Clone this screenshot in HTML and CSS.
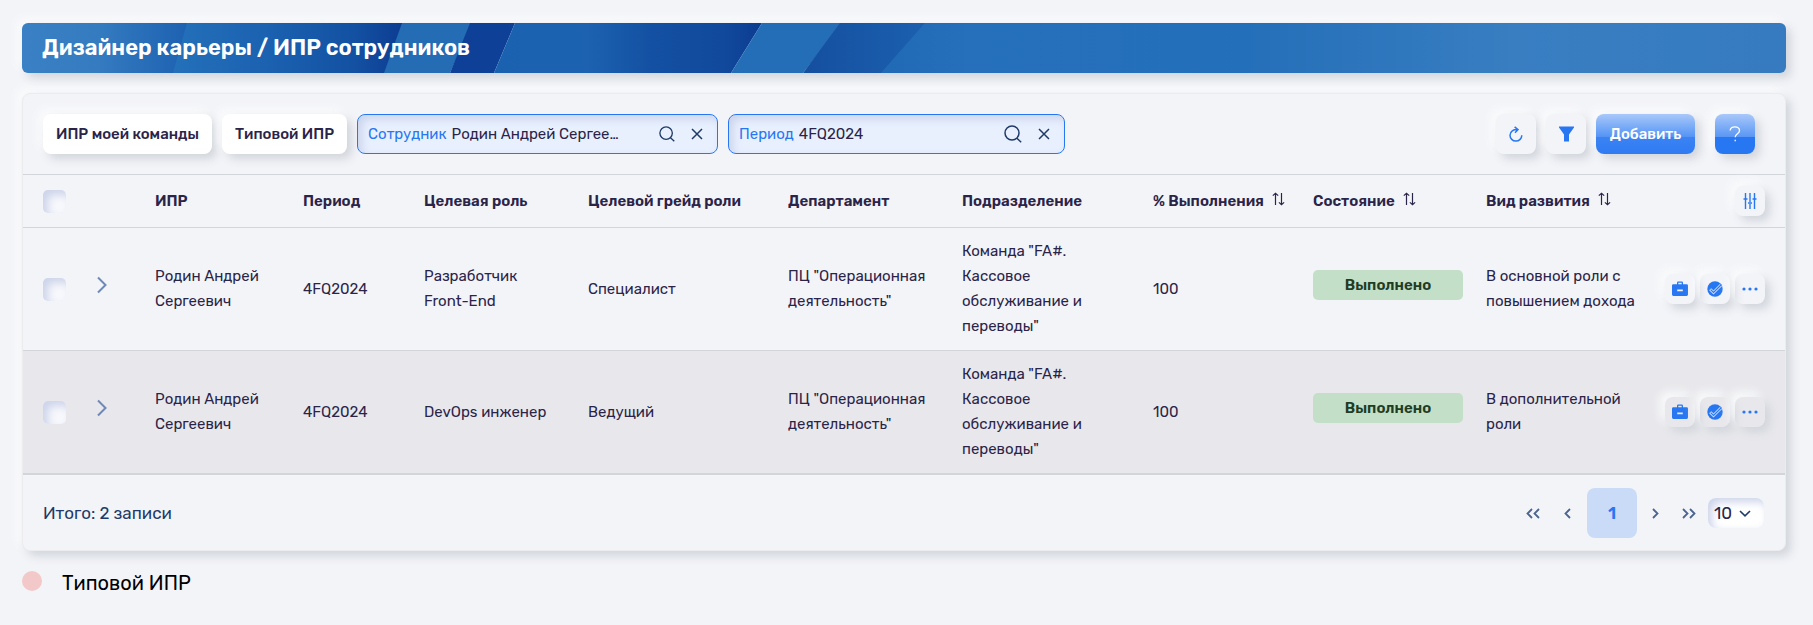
FILE: index.html
```html
<!DOCTYPE html>
<html lang="ru">
<head>
<meta charset="utf-8">
<title>Дизайнер карьеры / ИПР сотрудников</title>
<link rel="stylesheet" href="styles.css">
</head>
<body>
<svg class="sprite" aria-hidden="true">
  <symbol id="i-search" viewBox="0 0 18 18"><circle cx="8" cy="8" r="7"/><path d="M12.900 13.200l4.300 4"/></symbol>
  <symbol id="i-close" viewBox="0 0 12 12"><path d="M1 1l10 10M11 1L1 11"/></symbol>
  <symbol id="i-sort" viewBox="0 0 13 14"><path d="M3.500 13V1.500M.8 3.600l2.700-2.400 2.700 2.400M9.500 1v11.500M6.900 10.400l2.600 2.400 2.600-2.400"/></symbol>
  <symbol id="i-chevron" viewBox="0 0 10 18"><path d="M1 1.500L8.500 9 1 16.500"/></symbol>
  <symbol id="i-case" viewBox="0 0 16 16"><path fill-rule="evenodd" d="M5 3.200V1.800Q5 .5 6.300.5h3.400Q11 .5 11 1.800v1.400h3.600q1.400 0 1.400 1.400v9q0 1.400-1.400 1.400H1.400Q0 15 0 13.600v-9q0-1.400 1.400-1.400zM6.300 3.200h3.400V1.800H6.300zM5.200 8.600v1.600h5.600V8.600z"/></symbol>
  <symbol id="i-check" viewBox="0 0 16 16"><circle cx="8" cy="8" r="7.700"/><path class="tick-edge" d="M3.200 8.200l3.300 3.300L14 4"/><path class="tick-core" d="M3.700 8.700l2.800 2.800L14.500 3.500"/></symbol>
  <symbol id="i-dots" viewBox="0 0 16 4"><circle cx="2" cy="2" r="1.600"/><circle cx="8" cy="2" r="1.600"/><circle cx="14" cy="2" r="1.600"/></symbol>
</svg>

<header class="banner">
  <svg class="banner-art" viewBox="0 0 1764 50" preserveAspectRatio="none" aria-hidden="true">
    <defs>
      <linearGradient id="g1"><stop offset="0" stop-color="#3a80c4"/><stop offset=".45" stop-color="#347bc0"/><stop offset="1" stop-color="#1c60b0"/></linearGradient>
      <linearGradient id="g2"><stop offset="0" stop-color="#2470b9"/><stop offset=".4" stop-color="#1b62b1"/><stop offset=".8" stop-color="#1350a2"/><stop offset="1" stop-color="#0c3c92"/></linearGradient>
      <linearGradient id="g3"><stop offset="0" stop-color="#1a62b0"/><stop offset=".35" stop-color="#1c62b0"/><stop offset=".6" stop-color="#134fa2"/><stop offset=".85" stop-color="#114a9d"/><stop offset="1" stop-color="#0c3c92"/></linearGradient>
      <linearGradient id="g4"><stop offset="0" stop-color="#154f9f"/><stop offset="1" stop-color="#1b60af"/></linearGradient>
      <linearGradient id="g5"><stop offset="0" stop-color="#2069b5"/><stop offset=".1" stop-color="#2670bb"/><stop offset=".4" stop-color="#246fb9"/><stop offset=".7" stop-color="#387ec1"/><stop offset="1" stop-color="#367bc0"/></linearGradient>
    </defs>
    <path fill="url(#g1)" d="M0 0h170v50H0z"/>
    <path fill="url(#g2)" d="M165 0h216l-18 50H151z"/>
    <path fill="#246cb4" d="M380 0h70l-22 50h-66z"/>
    <path fill="#0f4097" d="M448 0h45l-21 50h-44z"/>
    <path fill="url(#g3)" d="M493 0h247l-31 50H472z"/>
    <path fill="#246db7" d="M740 0h80l-39 50h-72z"/>
    <path fill="url(#g4)" d="M818 0h86l-44 50h-79z"/>
    <path fill="url(#g5)" d="M903 0h861v50H859z"/>
  </svg>
  <h1 class="banner-title">Дизайнер карьеры / ИПР сотрудников</h1>
</header>

<main class="card">
  <div class="toolbar">
    <button class="btn btn-white">ИПР моей команды</button>
    <button class="btn btn-white">Типовой ИПР</button>
    <div class="field field-wide">
      <label class="field-label" for="employee">Сотрудник</label>
      <input class="field-input" id="employee" type="text" value="Родин Андрей Сергеевич">
      <button class="icon-btn" aria-label="Найти сотрудника"><svg class="ico s16"><use href="#i-search"/></svg></button>
      <button class="icon-btn" aria-label="Очистить сотрудника"><svg class="ico s12"><use href="#i-close"/></svg></button>
    </div>
    <div class="field">
      <label class="field-label" for="period">Период</label>
      <input class="field-input" id="period" type="text" value="4FQ2024">
      <button class="icon-btn" aria-label="Найти период"><svg class="ico s18"><use href="#i-search"/></svg></button>
      <button class="icon-btn" aria-label="Очистить период"><svg class="ico s12"><use href="#i-close"/></svg></button>
    </div>
    <div class="toolbar-end">
      <button class="btn btn-soft" aria-label="Обновить"><svg class="line-blue" width="16" height="16" viewBox="0 0 16 16"><path d="M9.800 3.600C5.500 3 2 5.600 2 9.200a5.900 5.900 0 0 0 11.800 0M6.600.8l3.400 2.800L7 6.800"/></svg></button>
      <button class="btn btn-soft" aria-label="Фильтр"><svg class="fill-blue" width="15" height="16" viewBox="0 0 15 16"><path d="M0 .5h15v1L10 8.500v7H5v-7L0 1.500z"/></svg></button>
      <button class="btn btn-primary">Добавить</button>
      <button class="btn btn-help" aria-label="Справка"><svg class="line-white" width="12" height="16" viewBox="0 0 12 16"><path d="M1.200 4.500C1.200 2.300 3.200.8 5.800.8s4.700 1.500 4.700 3.900c0 3.200-4.300 3.100-4.300 6.600M6.200 13.800v1.500"/></svg></button>
    </div>
  </div>

  <table class="grid">
    <colgroup><col class="c-check"><col class="c-open"><col class="c-ipr"><col class="c-period"><col class="c-role"><col class="c-grade"><col class="c-dept"><col class="c-unit"><col class="c-done"><col class="c-state"><col class="c-kind"><col class="c-act"></colgroup>
    <thead>
      <tr>
        <th class="first"><input class="check" type="checkbox" aria-label="Выбрать все"></th>
        <th></th>
        <th>ИПР</th>
        <th>Период</th>
        <th>Целевая роль</th>
        <th>Целевой грейд роли</th>
        <th>Департамент</th>
        <th>Подразделение</th>
        <th>% Выполнения<svg class="sort"><use href="#i-sort"/></svg></th>
        <th>Состояние<svg class="sort"><use href="#i-sort"/></svg></th>
        <th>Вид развития<svg class="sort"><use href="#i-sort"/></svg></th>
        <th class="last"><div class="actions"><button class="btn btn-small" aria-label="Настройка столбцов"><svg class="line-blue thin" width="14" height="16" viewBox="0 0 14 16"><path d="M2.500 0v16M7 0v9M7 11v5M11.500 0v16M.5 6h4M5 10h4M9.500 6h4"/></svg></button></div></th>
      </tr>
    </thead>
    <tbody>
      <tr>
        <td class="first"><input class="check" type="checkbox" aria-label="Выбрать строку 1"></td>
        <td><button class="icon-btn open" aria-label="Раскрыть"><svg class="chev"><use href="#i-chevron"/></svg></button></td>
        <td>Родин Андрей Сергеевич</td>
        <td>4FQ2024</td>
        <td class="narrow">Разработчик Front-End</td>
        <td>Специалист</td>
        <td>ПЦ "Операционная деятельность"</td>
        <td class="narrow">Команда "FA#. Кассовое обслуживание и переводы"</td>
        <td>100</td>
        <td><div class="badge">Выполнено</div></td>
        <td>В основной роли с повышением дохода</td>
        <td class="last"><div class="actions">
          <button class="btn btn-small" aria-label="Портфель"><svg class="fill-blue s16"><use href="#i-case"/></svg></button>
          <button class="btn btn-small" aria-label="Согласовать"><svg class="fill-blue s16"><use href="#i-check"/></svg></button>
          <button class="btn btn-small" aria-label="Ещё"><svg class="fill-blue dots"><use href="#i-dots"/></svg></button>
        </div></td>
      </tr>
      <tr>
        <td class="first"><input class="check" type="checkbox" aria-label="Выбрать строку 2"></td>
        <td><button class="icon-btn open" aria-label="Раскрыть"><svg class="chev"><use href="#i-chevron"/></svg></button></td>
        <td>Родин Андрей Сергеевич</td>
        <td>4FQ2024</td>
        <td class="narrow">DevOps инженер</td>
        <td>Ведущий</td>
        <td>ПЦ "Операционная деятельность"</td>
        <td class="narrow">Команда "FA#. Кассовое обслуживание и переводы"</td>
        <td>100</td>
        <td><div class="badge">Выполнено</div></td>
        <td>В дополнительной роли</td>
        <td class="last"><div class="actions">
          <button class="btn btn-small" aria-label="Портфель"><svg class="fill-blue s16"><use href="#i-case"/></svg></button>
          <button class="btn btn-small" aria-label="Согласовать"><svg class="fill-blue s16"><use href="#i-check"/></svg></button>
          <button class="btn btn-small" aria-label="Ещё"><svg class="fill-blue dots"><use href="#i-dots"/></svg></button>
        </div></td>
      </tr>
    </tbody>
  </table>

  <footer class="footer">
    <span class="total">Итого: 2 записи</span>
    <nav class="pager" aria-label="Страницы">
      <button class="page" aria-label="Первая"><svg width="14" height="11" viewBox="0 0 14 11"><path d="M6 1L1.500 5.500 6 10M13 1L8.500 5.500 13 10"/></svg></button>
      <button class="page" aria-label="Предыдущая"><svg width="7" height="11" viewBox="0 0 7 11"><path d="M6 1L1.500 5.500 6 10"/></svg></button>
      <button class="page page-current" aria-current="page">1</button>
      <button class="page" aria-label="Следующая"><svg width="7" height="11" viewBox="0 0 7 11"><path d="M1 1l4.500 4.500L1 10"/></svg></button>
      <button class="page" aria-label="Последняя"><svg width="14" height="11" viewBox="0 0 14 11"><path d="M1 1l4.500 4.500L1 10M8 1l4.500 4.500L8 10"/></svg></button>
    </nav>
    <div class="size">
      <select class="size-select" aria-label="Записей на странице"><option>10</option><option>20</option><option>50</option></select>
      <svg class="size-arrow" width="12" height="7" viewBox="0 0 12 7"><path d="M1 1l5 4.800L11 1"/></svg>
    </div>
  </footer>
</main>

<div class="legend"><span class="legend-dot"></span><span>Типовой ИПР</span></div>
</body>
</html>
```
FILE: styles.css
```css
* { box-sizing: border-box; }

body {
  margin: 0;
  padding: 23px 27px 20px 22px;
  background: #f3f4f8;
  color: #2b2449;
  font: 15px/25px Rubik, Roboto, "Liberation Sans", sans-serif;
}

button, input, select { font: inherit; color: inherit; margin: 0; }
button { border: 0; padding: 0; background: none; cursor: pointer; }
svg { display: block; fill: none; }
.sprite { position: absolute; width: 0; height: 0; }

.banner {
  position: relative;
  display: flex;
  align-items: center;
  height: 50px;
  margin-bottom: 20px;
  padding: 0 20px;
  border-radius: 6px;
  box-shadow: 5px 5px 10px #d1d5db, -5px -5px 10px #fafbfc;
}
.banner-art { position: absolute; inset: 0; width: 100%; height: 100%; border-radius: 6px; }
.banner-title { position: relative; margin: 0; color: #fff; font-size: 22px; font-weight: 600; line-height: 30px; }

.card {
  border: 1px solid #ececef;
  border-radius: 8px;
  background: #f3f4f8;
  box-shadow: 5px 5px 10px #d1d5db, -5px -5px 10px #fafbfc;
}

.toolbar { display: flex; gap: 10px; padding: 20px 30px 20px 20px; }
.toolbar-end { display: flex; gap: 10px; margin-left: auto; }

.btn {
  display: flex;
  align-items: center;
  justify-content: center;
  height: 40px;
  border-radius: 8px;
  box-shadow: 5px 5px 10px #d1d5db, -5px -5px 10px #fafbfc;
}
.btn-white { padding: 0 13px; background: #fff; font-weight: 500; white-space: nowrap; }
.btn-soft { width: 40px; background: #f3f4f8; }
.btn-primary, .btn-help {
  color: #fff;
  font-weight: 500;
  background: linear-gradient(#a9c8fa 0, #5a97f4 57%, #2877f2 58%, #2877f2 100%);
}
.btn-primary { width: 99px; background: linear-gradient(#a9c8fa 0, #5494f5 57%, #3b83f4 58%, #2f7bf2 100%); }
.btn-help { width: 40px; margin-left: 10px; }
.btn-small { width: 30px; height: 30px; }

.field {
  display: flex;
  align-items: center;
  width: 337px;
  height: 40px;
  padding: 0 14px 0 10px;
  border: 1px solid #2877f2;
  border-radius: 8px;
  background: #e8f0fe;
  box-shadow: inset 4px 4px 8px #cbd4ec;
}
.field-wide { width: 361px; }
.field-label { margin-right: 5px; color: #2877f2; }
.field-input {
  flex: 1;
  width: 0;
  height: 25px;
  margin-right: 36px;
  padding: 0;
  border: 0;
  outline: 0;
  background: none;
  text-overflow: ellipsis;
}
.field .icon-btn + .icon-btn { margin-left: 16px; }

.ico { stroke: #1f3a68; stroke-width: 1.5; }
.s12 { width: 12px; height: 12px; }
.s16 { width: 16px; height: 16px; }
.s18 { width: 18px; height: 18px; }
.line-blue { stroke: #2877f2; stroke-width: 1.5; }
.thin { stroke-width: 1.4; }
.line-white { stroke: #fff; stroke-width: 1.3; }
.fill-blue { fill: #2877f2; }
.tick-edge { fill: none; stroke: #cfe0fc; stroke-width: 3; }
.tick-core { fill: none; stroke: #2877f2; stroke-width: 1.1; }
.dots { width: 16px; height: 4px; }

.grid { width: 100%; table-layout: fixed; border-collapse: separate; border-spacing: 0; border-bottom: 1px solid #d2d5da; }
.c-check { width: 54px; }
.c-open { width: 68px; }
.c-ipr { width: 148px; }
.c-period { width: 121px; }
.c-role { width: 164px; }
.c-grade { width: 200px; }
.c-dept { width: 174px; }
.c-unit { width: 191px; }
.c-done { width: 160px; }
.c-state { width: 173px; }
.c-kind { width: 179px; }
.c-act { width: 130px; }

.grid th, .grid td { padding: 11px 10px; text-align: left; vertical-align: middle; border-bottom: 1px solid #d2d5da; }
.grid th { border-top: 1px solid #d2d5da; font-weight: 600; white-space: nowrap; }
.grid .first { padding-left: 20px; }
.grid .last { padding-left: 0; padding-right: 20px; }
.grid .narrow { padding-right: 30px; }
.grid tbody tr:nth-child(2) td { background: #e8e8ec; }

.check {
  appearance: none;
  display: block;
  width: 23px;
  height: 23px;
  border-radius: 5px;
  background: #f7f8fc;
  box-shadow: inset 5px 5px 8px #cdd4ea;
}
.sort { display: inline-block; width: 13px; height: 14px; margin-left: 8px; stroke: #2b2449; stroke-width: 1.2; }
.open { display: block; width: 30px; padding: 0 10px; margin-bottom: 8px; }
.chev { width: 10px; height: 18px; stroke: #6e88b8; stroke-width: 2; }

.badge {
  max-width: 150px;
  height: 30px;
  margin-bottom: 8px;
  border-radius: 5px;
  background: #c3dfc8;
  color: #1f3d25;
  font-weight: 600;
  line-height: 30px;
  text-align: center;
}
.actions { display: flex; justify-content: flex-end; gap: 5px; }

.footer { display: flex; align-items: center; padding: 13px 21px 12px 20px; }
.total { color: #1f3a68; font-size: 17px; }
.pager { display: flex; align-items: center; margin-left: auto; }
.page { display: flex; align-items: center; justify-content: center; width: 34px; height: 50px; }
.page path { stroke: #4a6590; stroke-width: 1.8; }
.page-current { width: 50px; margin: 0 1px 0 3px; border-radius: 8px; background: #c9dbf6; color: #2877f2; font-size: 17px; font-weight: 600; }
.size { display: flex; align-items: center; position: relative; margin-left: 2px; }
.size-select {
  appearance: none;
  width: 56px;
  height: 30px;
  padding: 0 0 0 6px;
  border: 0;
  border-radius: 8px;
  background: #fff;
  box-shadow: inset 4px 4px 8px #cdd4ea;
  font-size: 17px;
}
.size-arrow { position: absolute; right: 13px; stroke: #1f3a68; stroke-width: 1.6; pointer-events: none; }

.legend { display: flex; gap: 20px; margin-top: 20px; color: #000; font-size: 20px; }
.legend-dot { width: 20px; height: 20px; border-radius: 50%; background: #f3c8c8; }
```
